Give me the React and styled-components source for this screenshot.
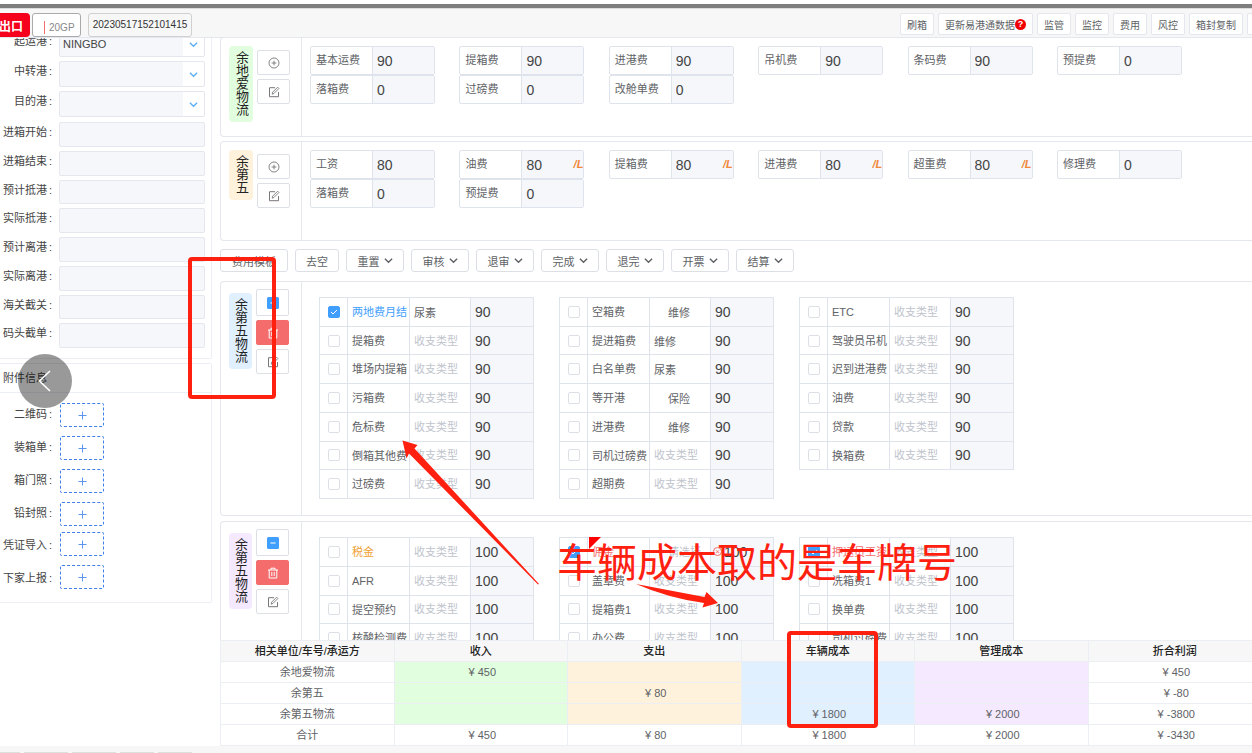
import React, { useId } from "react";
import styled, { createGlobalStyle, css } from "styled-components";

const Global = createGlobalStyle`
  * { box-sizing: border-box; }
  html, body { margin: 0; padding: 0; background: #fff; }
  body, button, input, select {
    font-family: "Liberation Sans", "Noto Sans CJK SC", sans-serif;
    font-size: 11px;
    color: #606266;
  }
  ul { list-style: none; margin: 0; padding: 0; }
  button { cursor: pointer; }
`;

const line = "#e4e7ed";
const red = "#ff2010";

/* ---------- frame ---------- */
const Page = styled.div`
  position: relative;
  display: flex;
  flex-direction: column;
  height: 100vh;
  overflow: hidden;
`;
const WindowEdge = styled.div`
  flex: none;
  height: 9px;
  border-top: 4px solid #fff;
  border-bottom: 1px solid #dcdcdc;
  background: #7e7e7e;
`;
const Header = styled.header`
  flex: none;
  display: flex;
  justify-content: space-between;
  height: 29px;
  background: #f7f7f7;
  border-bottom: 1px solid ${line};
  overflow: hidden;
`;
const HeaderLeft = styled.div`
  display: flex;
  align-items: flex-end;
`;
const ExportButton = styled.button`
  width: 30px;
  height: 24px;
  padding: 0 7px 0 0;
  border: 0;
  border-radius: 0 4px 4px 0;
  background: #f5001d;
  color: #fff;
  font-size: 12px;
  font-weight: 700;
  display: flex;
  align-items: center;
  justify-content: flex-end;
  white-space: nowrap;
`;
const SizeTag = styled.span`
  display: flex;
  align-items: center;
  gap: 4px;
  height: 24px;
  width: 49px;
  margin-left: 2px;
  padding: 4px 0 0 11px;
  border: 1px solid #aaa;
  border-radius: 3px;
  background: #fff;
  color: #888;
  font-size: 10px;
  &::before {
    content: "";
    width: 1px;
    height: 13px;
    background: #f56c6c;
  }
`;
const NumberTag = styled.span`
  height: 24px;
  width: 104px;
  margin-left: 7px;
  border: 1px solid #d0d0d0;
  border-radius: 3px;
  color: #333;
  font-size: 10px;
  line-height: 22px;
  text-align: center;
`;
const HeaderActions = styled.nav`
  display: flex;
  gap: 4px;
  padding-top: 4px;
  margin-right: -29px;
`;
const HeaderButton = styled.button`
  display: flex;
  align-items: center;
  flex: none;
  height: 22px;
  padding: 0 6px;
  border: 1px solid ${line};
  border-radius: 2px;
  background: #fff;
  font-size: 10px;
  white-space: nowrap;
`;
const HelpDot = styled.span`
  width: 11px;
  height: 11px;
  border-radius: 50%;
  background: #f00000;
  color: #fff;
  font-size: 9px;
  font-weight: 700;
  line-height: 11px;
  text-align: center;
`;
const Body = styled.div`
  flex: 1;
  min-height: 0;
  display: flex;
  gap: 8px;
`;
const Content = styled.main`
  flex: 1;
  min-width: 0;
  display: flex;
  flex-direction: column;
`;
const Scroller = styled.div`
  flex: 1;
  min-height: 0;
  overflow: hidden;
`;
const Footer = styled.footer`
  flex: none;
  display: flex;
  gap: 4px;
  height: 7px;
  padding-top: 6px;
  background: #f7f7f7;
`;
const FooterTab = styled.span`
  flex: none;
  width: ${(p) => p.$w}px;
  background: #dedede;
`;

/* ---------- sidebar ---------- */
const Sidebar = styled.aside`
  flex: none;
  width: 212px;
  overflow: hidden;
`;
const Panel = styled.section`
  border: 1px solid #ebeef5;
  border-left: 0;
  border-radius: 0 2px 2px 0;
  margin-bottom: 4px;
`;
const PortPanel = styled(Panel)`
  margin-top: -8px;
  padding-bottom: 10px;
`;
const PortFields = styled.div`
  display: grid;
  gap: 4px;
  margin-bottom: 5px;
`;
const DateFields = styled.div`
  display: grid;
  grid-template-rows: repeat(8, 1fr);
  gap: 4px;
  height: 226px;
`;
const FieldRow = styled.div`
  display: flex;
  align-items: stretch;
`;
const FieldLabel = styled.label`
  flex: none;
  display: flex;
  justify-content: flex-end;
  gap: 2px;
  width: 52px;
  margin-right: 7px;
  color: #444;
  line-height: ${(p) => p.$lh || 20}px;
  white-space: nowrap;
`;
const FieldInput = styled.input`
  width: 146px;
  height: 100%;
  padding: 0 4px;
  border: 1px solid ${line};
  border-radius: 2px;
  background: #f5f7fb;
  outline: 0;
`;
const SelectBox = styled.div`
  position: relative;
  width: 146px;
  height: 26px;
  svg { position: absolute; right: 7px; top: 9px; pointer-events: none; }
`;
const FieldSelect = styled.select`
  appearance: none;
  width: 100%;
  height: 100%;
  padding: 0 3px;
  border: 1px solid ${line};
  border-radius: 2px;
  background: linear-gradient(to left, #fff 21px, #f5f7fb 21px);
  color: #444;
`;
const PanelTitle = styled.h2`
  margin: 0;
  height: 29px;
  padding-left: 3px;
  border-bottom: 1px solid #ebeef5;
  color: #444;
  font-size: 11px;
  font-weight: 400;
  line-height: 28px;
`;
const UploadList = styled.div`
  display: grid;
  gap: ${(p) => (p.$last ? 7 : 9)}px;
  padding: ${(p) => (p.$last ? "6px 0 11px" : "10px 0 0")};
`;
const UploadButton = styled.button`
  width: 44px;
  height: 24px;
  margin-left: 1px;
  padding: 0;
  border: 1px dashed #3f7fe8;
  border-radius: 2px;
  background: #fff;
  color: #5b95ee;
  display: grid;
  place-items: center;
`;

/* ---------- company sections ---------- */
const Section = styled.section`
  display: flex;
  height: ${(p) => p.$h}px;
  margin-top: ${(p) => p.$mt || 0}px;
  border: 1px solid ${line};
  border-right: 0;
  border-radius: 4px 0 0 4px;
`;
const Side = styled.div`
  flex: none;
  display: flex;
  align-items: flex-start;
  gap: 4px;
  width: 81px;
  padding: ${(p) => (p.$full ? 11 : 8)}px 0 0 8px;
  border-right: 1px solid ${line};
`;
const Company = styled.h3`
  margin: 0;
  width: ${(p) => (p.$full ? 23 : 24)}px;
  padding: 5px 0 6px;
  border-radius: 4px;
  background: ${(p) => p.$bg};
  color: #222;
  font-size: 13px;
  font-weight: 400;
  line-height: 24px;
  writing-mode: vertical-rl;
`;
const SideActions = styled.div`
  display: grid;
  gap: 4px;
  margin-top: ${(p) => (p.$full ? -4 : 4)}px;
`;
const IconButton = styled.button`
  display: grid;
  place-items: center;
  width: 33px;
  height: ${(p) => (p.$tall ? 27 : 25)}px;
  padding: 0;
  border: 1px solid ${(p) => (p.$danger ? "#f56c6c" : "#dcdfe6")};
  border-radius: 2px;
  background: ${(p) => (p.$danger ? "#f56c6c" : "#fff")};
  color: ${(p) => (p.$danger ? "#fff" : "#777")};
`;
const SimpleGrid = styled.ul`
  flex: 1;
  display: grid;
  grid-template-columns: repeat(6, 125px);
  justify-content: space-between;
  align-content: start;
  padding: 8px 70px 0 8px;
`;
const SimpleItem = styled.li`
  display: grid;
  grid-template-columns: 62px 1fr auto;
  grid-template-rows: minmax(0, 1fr);
  height: 29px;
  border: 1px solid #dfe3ec;
  border-radius: 2px;
`;
const SimpleLabel = styled.label`
  padding-left: 5px;
  border-right: 1px solid #dfe3ec;
  line-height: 27px;
  white-space: nowrap;
`;
const Amount = styled.input`
  min-width: 0;
  width: 100%;
  height: 100%;
  padding: 0 4px;
  border: 0;
  outline: 0;
  background: #f5f7fb;
  color: #444;
  font-size: 14px;
`;
const Unit = styled.span`
  background: #f5f7fb;
  color: #f0883a;
  font-size: 11px;
  font-style: italic;
  font-weight: 700;
  line-height: 27px;
`;

/* ---------- toolbar ---------- */
const Toolbar = styled.div`
  display: flex;
  gap: 7px;
  padding: 8px 0 9px;
`;
const ToolButton = styled.button`
  display: flex;
  align-items: center;
  justify-content: center;
  gap: 4px;
  width: ${(p) => p.$w || 58}px;
  height: 23px;
  padding: 0;
  border: 1px solid #dcdfe6;
  border-radius: 3px;
  background: #fff;
`;

/* ---------- fee grid ---------- */
const FeeGrid = styled.ul`
  display: grid;
  grid-auto-flow: column;
  grid-template-columns: repeat(3, 215px);
  grid-template-rows: repeat(${(p) => p.$rows}, minmax(0, 1fr));
  column-gap: 25px;
  height: ${(p) => p.$h}px;
  margin: 15px 0 0 17px;
`;
const FeeRow = styled.li`
  position: relative;
  display: grid;
  grid-template-columns: 28px 62px 61px 1fr;
  grid-template-rows: minmax(0, 1fr);
  margin-bottom: -1px;
  border: 1px solid #dfe3ec;
  && > * { border-right: 1px solid #dfe3ec; min-width: 0; }
  && > :last-child { border-right: 0; }
`;
const CheckCell = styled.span`
  display: grid;
  place-items: center;
`;
const Check = styled.input`
  appearance: none;
  width: 12px;
  height: 12px;
  margin: 0;
  border: 1px solid #dcdfe6;
  border-radius: 2px;
  background: #fff;
  &:checked {
    border-color: #409eff;
    background: #409eff url("data:image/svg+xml,%3Csvg xmlns='http://www.w3.org/2000/svg' viewBox='0 0 10 10'%3E%3Cpath d='M2 5l2 2 4-4' fill='none' stroke='white'/%3E%3C/svg%3E");
  }
`;
const FeeName = styled.label`
  padding-left: 4px;
  overflow: hidden;
  color: ${(p) => p.$color || "#606266"};
  line-height: 28px;
  white-space: nowrap;
`;
const FeeType = styled.input`
  width: 100%;
  height: 100%;
  padding: 0 0 0 ${(p) => (p.$indent ? 18 : 4)}px;
  border: 0;
  outline: 0;
  background: #fff;
  &::placeholder { color: #c0c4cc; opacity: 1; }
`;
const AmountCell = styled.span`
  position: relative;
  background: #f5f7fb;
  ${(p) => p.$flag && css`input { padding-left: 13px; }`}
`;
const ErrorMark = styled.span`
  position: absolute;
  left: 2px;
  top: 9px;
  width: 9px;
  height: 9px;
  border: 1px solid #f56c6c;
  border-radius: 50%;
  color: #f56c6c;
  font-size: 8px;
  line-height: 7px;
  text-align: center;
`;
const Corner = styled.span`
  position: absolute;
  left: 29px;
  top: -1px;
  border-top: 12px solid #f00;
  border-right: 12px solid transparent;
`;

/* ---------- summary ---------- */
const Summary = styled.table`
  flex: none;
  width: calc(100% + 10px);
  table-layout: fixed;
  border-collapse: collapse;
  background: #fff;
  text-align: center;
  th, td {
    height: 21px;
    padding: 0;
    border: 1px solid #ebeef2;
    line-height: 20px;
    font-weight: 400;
  }
  thead th {
    background: #f7f7f7;
    color: #222;
    font-weight: 500;
  }
`;
const Cell = styled.td`
  && { padding-left: 3px; }
  background: ${(p) => p.$bg || "#fff"};
`;

/* ---------- overlay ---------- */
const BackButton = styled.button`
  position: absolute;
  left: 18px;
  top: 354px;
  width: 54px;
  height: 54px;
  padding: 0;
  border: 0;
  border-radius: 50%;
  background: rgba(0, 0, 0, 0.4);
  display: grid;
  place-items: center;
`;
const MarkBox = styled.div`
  position: absolute;
  left: ${(p) => p.$x}px;
  top: ${(p) => p.$y}px;
  width: ${(p) => p.$w}px;
  height: ${(p) => p.$h}px;
  border: 4px solid ${red};
  border-radius: 4px;
  pointer-events: none;
`;
const MarkText = styled.p`
  position: absolute;
  left: 557px;
  top: 539px;
  margin: 0;
  color: ${red};
  font-size: 40px;
  line-height: 48px;
  white-space: nowrap;
  pointer-events: none;
`;
const Arrows = styled.svg`
  position: absolute;
  left: 0;
  top: 0;
  pointer-events: none;
`;

/* ---------- icons ---------- */
const Chevron = ({ size = 9, color = "#606266", w = 1.6 }) => (
  <svg width={size} height={size} viewBox="0 0 10 10" fill="none" stroke={color} strokeWidth={w}>
    <path d="M1 3l4 4 4-4" />
  </svg>
);
const PlusCircle = () => (
  <svg width="12" height="12" viewBox="0 0 12 12" fill="none" stroke="currentColor" strokeWidth="0.9">
    <circle cx="6" cy="6" r="5" />
    <path d="M6 3.6v4.8M3.6 6h4.8" />
  </svg>
);
const Edit = () => (
  <svg width="12" height="12" viewBox="0 0 12 12" fill="none" stroke="currentColor" strokeWidth="1">
    <path d="M7 1.7H1.5v9h9V6" />
    <path d="M4.2 8.2l.4-2L9.6 1.2l1.3 1.3-5 5z" strokeWidth="0.9" />
  </svg>
);
const Trash = () => (
  <svg width="12" height="12" viewBox="0 0 12 12" fill="none" stroke="currentColor" strokeWidth="1">
    <path d="M1 3h10M4 3V1.2h4V3M2.2 3v8h7.6V3M4.8 5v4M7.2 5v4" />
  </svg>
);
const Minus = () => (
  <svg width="12" height="12" viewBox="0 0 12 12">
    <rect width="12" height="12" rx="1.5" fill="#409eff" />
    <path d="M3.4 6h5.2" stroke="#fff" />
  </svg>
);
const Plus = () => (
  <svg width="9" height="9" viewBox="0 0 9 9" stroke="currentColor">
    <path d="M4.5 0.5v8M0.5 4.5h8" />
  </svg>
);

/* ---------- composed parts ---------- */
function PortSelect({ label, value }) {
  const id = useId();
  return (
    <FieldRow>
      <FieldLabel htmlFor={id}>{label}<span>:</span></FieldLabel>
      <SelectBox>
        <FieldSelect id={id} defaultValue={value}>
          <option>{value}</option>
        </FieldSelect>
        <Chevron color="#5fb0f5" />
      </SelectBox>
    </FieldRow>
  );
}
function DateField({ label }) {
  const id = useId();
  return (
    <FieldRow>
      <FieldLabel htmlFor={id}>{label}<span>:</span></FieldLabel>
      <FieldInput id={id} type="text" />
    </FieldRow>
  );
}
function Upload({ label, lineHeight }) {
  const id = useId();
  return (
    <FieldRow>
      <FieldLabel htmlFor={id} $lh={lineHeight}>{label}<span>:</span></FieldLabel>
      <UploadButton id={id} type="button"><Plus /></UploadButton>
    </FieldRow>
  );
}
function SimpleFee({ name, value, unit }) {
  const id = useId();
  return (
    <SimpleItem>
      <SimpleLabel htmlFor={id}>{name}</SimpleLabel>
      <Amount id={id} type="text" defaultValue={value} />
      {unit && <Unit>/L</Unit>}
    </SimpleItem>
  );
}
function Fee({ name, type, hint = "收支类型", indent, value, checked, color, flag }) {
  const id = useId();
  return (
    <FeeRow>
      <CheckCell>
        <Check id={id} type="checkbox" defaultChecked={checked} />
        {flag && <Corner />}
      </CheckCell>
      <FeeName htmlFor={id} $color={color}>{name}</FeeName>
      <FeeType type="text" aria-label={name + "收支类型"} defaultValue={type} placeholder={hint} $indent={indent} />
      <AmountCell $flag={flag}>
        {flag && <ErrorMark>×</ErrorMark>}
        <Amount type="text" aria-label={name + "金额"} defaultValue={value} />
      </AmountCell>
    </FeeRow>
  );
}
function SimpleSection({ company, bg, fees, mt }) {
  return (
    <Section $h={100} $mt={mt}>
      <Side>
        <Company $bg={bg}>{company}</Company>
        <SideActions>
          <IconButton type="button" aria-label="新增"><PlusCircle /></IconButton>
          <IconButton type="button" aria-label="编辑"><Edit /></IconButton>
        </SideActions>
      </Side>
      <SimpleGrid>
        {fees.map(([name, value, unit]) => <SimpleFee key={name} name={name} value={value} unit={unit} />)}
      </SimpleGrid>
    </Section>
  );
}
function FeeSection({ company, bg, fees, rows, gridHeight, height, mt, value }) {
  return (
    <Section $h={height} $mt={mt}>
      <Side $full>
        <Company $bg={bg} $full>{company}</Company>
        <SideActions $full>
          <IconButton type="button" $tall aria-label="收起"><Minus /></IconButton>
          <IconButton type="button" $danger aria-label="删除"><Trash /></IconButton>
          <IconButton type="button" aria-label="编辑"><Edit /></IconButton>
        </SideActions>
      </Side>
      <FeeGrid $rows={rows} $h={gridHeight}>
        {fees.map((f) => <Fee key={f.name} value={value} {...f} />)}
      </FeeGrid>
    </Section>
  );
}

/* ---------- data ---------- */
const green = "#e1ffde", cream = "#fff2dc", sky = "#e0f0ff", lilac = "#f5e9ff";
const feesA = [
  ["基本运费", 90], ["提箱费", 90], ["进港费", 90], ["吊机费", 90], ["条码费", 90], ["预提费", 0],
  ["落箱费", 0], ["过磅费", 0], ["改舱单费", 0],
];
const feesB = [
  ["工资", 80], ["油费", 80, true], ["提箱费", 80, true], ["进港费", 80, true], ["超重费", 80, true], ["修理费", 0],
  ["落箱费", 0], ["预提费", 0],
];
const feesC = [
  { name: "两地费月结", type: "尿素", checked: true, color: "#409eff" },
  { name: "提箱费" }, { name: "堆场内提箱" }, { name: "污箱费" }, { name: "危标费" }, { name: "倒箱其他费" }, { name: "过磅费" },
  { name: "空箱费", type: "维修", indent: true },
  { name: "提进箱费", type: "维修" },
  { name: "白名单费", type: "尿素" },
  { name: "等开港", type: "保险", indent: true },
  { name: "进港费", type: "维修", indent: true },
  { name: "司机过磅费" }, { name: "超期费" },
  { name: "ETC" }, { name: "驾驶员吊机" }, { name: "迟到进港费" }, { name: "油费" }, { name: "贷款" }, { name: "换箱费" },
];
const feesD = [
  { name: "税金", color: "#f0a030" }, { name: "AFR" }, { name: "提空预约" }, { name: "核酸检测费" },
  { name: "佣金", hint: "请选择", indent: true, checked: true, color: "#f56c6c", flag: true },
  { name: "盖章费" }, { name: "提箱费1" }, { name: "办公费" },
  { name: "押运员工资", checked: true, color: "#f56c6c" }, { name: "洗箱费1" }, { name: "换单费" }, { name: "司机过磅费" },
];
const tints = [green, cream, sky, lilac, "#fff"];
const summary = [
  ["余地爱物流", ["¥ 450", "", "", "", "¥ 450"]],
  ["余第五", ["", "¥ 80", "", "", "¥ -80"]],
  ["余第五物流", ["", "", "¥ 1800", "¥ 2000", "¥ -3800"]],
  ["合计", ["¥ 450", "¥ 80", "¥ 1800", "¥ 2000", "¥ -3430"]],
];

export default function App() {
  return (
    <Page>
      <Global />
      <WindowEdge />
      <Header>
        <HeaderLeft>
          <ExportButton type="button">出口</ExportButton>
          <SizeTag>20GP</SizeTag>
          <NumberTag>20230517152101415</NumberTag>
        </HeaderLeft>
        <HeaderActions>
          <HeaderButton type="button">刷箱</HeaderButton>
          <HeaderButton type="button">更新易港通数据<HelpDot>?</HelpDot></HeaderButton>
          {["监管", "监控", "费用", "风控", "箱封复制", "箱封"].map((t) => (
            <HeaderButton type="button" key={t}>{t}</HeaderButton>
          ))}
        </HeaderActions>
      </Header>
      <Body>
        <Sidebar>
          <PortPanel>
            <PortFields>
              <PortSelect label="起运港" value="NINGBO" />
              <PortSelect label="中转港" value="" />
              <PortSelect label="目的港" value="" />
            </PortFields>
            <DateFields>
              {["进箱开始", "进箱结束", "预计抵港", "实际抵港", "预计离港", "实际离港", "海关截关", "码头截单"].map((t) => (
                <DateField key={t} label={t} />
              ))}
            </DateFields>
          </PortPanel>
          <Panel>
            <PanelTitle>附件信息</PanelTitle>
            <UploadList>
              {["二维码", "装箱单", "箱门照", "铅封照"].map((t) => <Upload key={t} label={t} lineHeight={22} />)}
            </UploadList>
            <UploadList $last>
              {["凭证导入", "下家上报"].map((t) => <Upload key={t} label={t} lineHeight={26} />)}
            </UploadList>
          </Panel>
        </Sidebar>
        <Content>
          <Scroller>
            <SimpleSection company="余地爱物流" bg={green} fees={feesA} mt={-1} />
            <SimpleSection company="余第五" bg={cream} fees={feesB} mt={4} />
            <Toolbar>
              <ToolButton type="button" $w={68}>费用模板</ToolButton>
              <ToolButton type="button" $w={44}>去空</ToolButton>
              {["重置", "审核", "退审", "完成", "退完", "开票", "结算"].map((t) => (
                <ToolButton type="button" key={t}>{t}<Chevron /></ToolButton>
              ))}
            </Toolbar>
            <FeeSection company="余第五物流" bg={sky} fees={feesC} value="90" rows={7} gridHeight={201} height={235} />
            <FeeSection company="余第五物流" bg={lilac} fees={feesD} value="100" rows={4} gridHeight={115} height={235} mt={5} />
          </Scroller>
          <Summary>
            <thead>
              <tr>
                {["相关单位/车号/承运方", "收入", "支出", "车辆成本", "管理成本", "折合利润"].map((t) => (
                  <th key={t} scope="col">{t}</th>
                ))}
              </tr>
            </thead>
            <tbody>
              {summary.map(([name, cells], r) => (
                <tr key={name}>
                  <th scope="row">{name}</th>
                  {cells.map((c, i) => <Cell key={i} $bg={r < 3 ? tints[i] : "#fff"}>{c}</Cell>)}
                </tr>
              ))}
            </tbody>
          </Summary>
        </Content>
      </Body>
      <Footer>
        {[20, 44, 44, 34, 34].map((w, i) => <FooterTab key={i} $w={w} />)}
      </Footer>

      <BackButton type="button" aria-label="返回">
        <svg width="14" height="22" viewBox="0 0 14 22" fill="none" stroke="#fff" strokeWidth="1.6">
          <path d="M12 1L1.5 11 12 21" />
        </svg>
      </BackButton>
      <MarkBox $x={188} $y={257} $w={88} $h={142} />
      <MarkBox $x={787} $y={631} $w={91} $h={97} />
      <MarkText>车辆成本取的是车牌号</MarkText>
      <Arrows width="760" height="620" viewBox="0 0 760 620" fill={red} aria-hidden="true">
        <path d="M402.500 440.500L417.500 445L414.500 448.500L539 584L538 584.500L409 453.500L406.500 458.500Z" />
        <path d="M636 584L704.500 597L706.500 592L718 603L702.500 607.500L704 603Q668 598 636 584Z" />
      </Arrows>
    </Page>
  );
}
